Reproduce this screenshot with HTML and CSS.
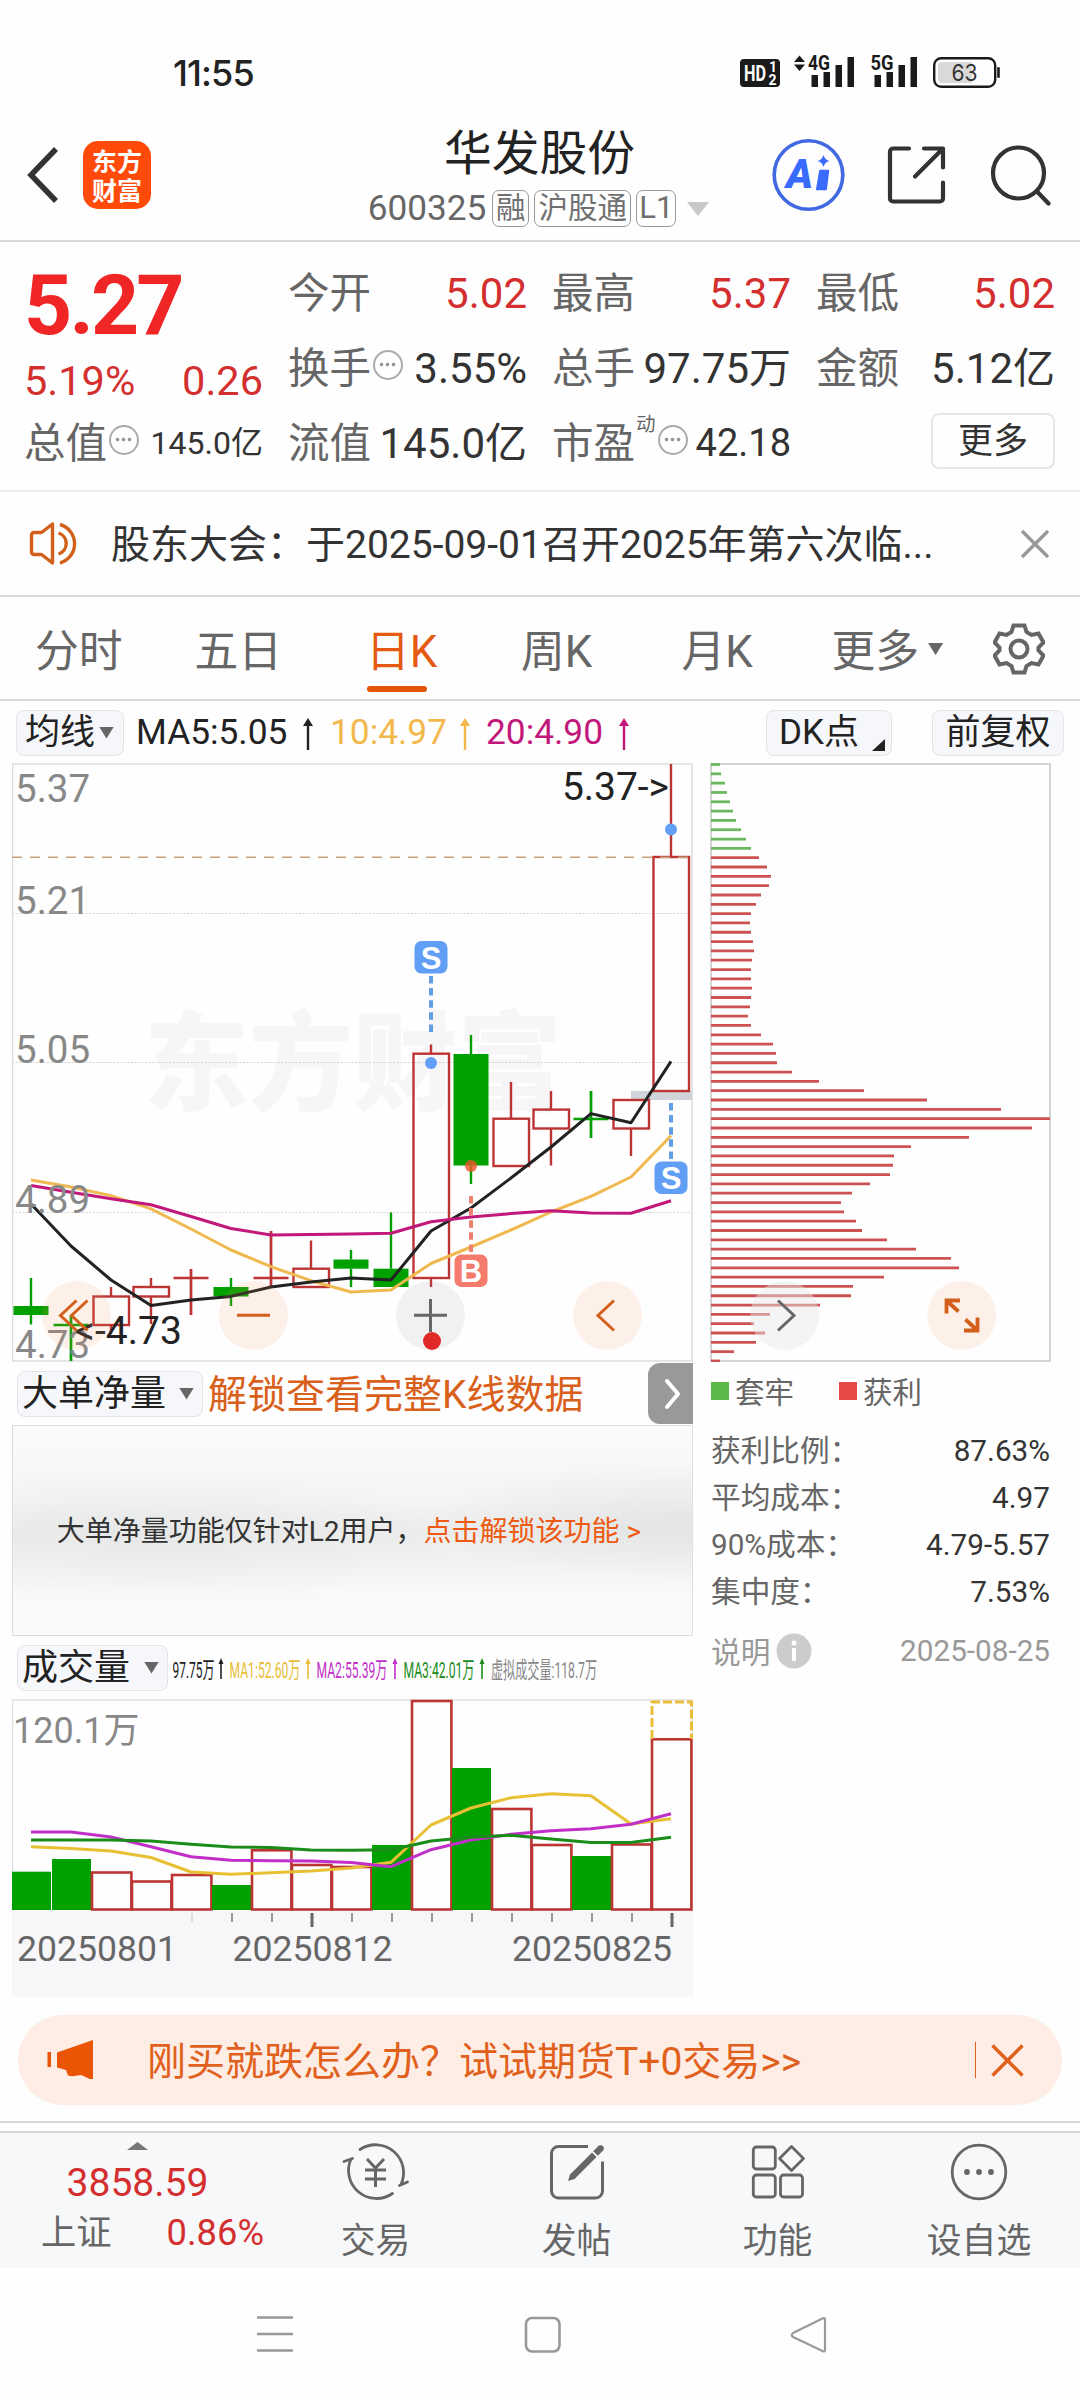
FILE: index.html
```html
<!DOCTYPE html>
<html lang="zh-CN">
<head>
<meta charset="utf-8">
<title>华发股份 600325</title>
<link rel="stylesheet" href="styles.css">
</head>
<body>
<div class="screen">
  <div class="status">
    <span class="clock">11:55</span>
    <svg class="status-icons" width="262" height="36" viewBox="738 52 262 36">
      <rect x="740" y="59" width="40" height="28" rx="4" fill="#1a1a1a"/>
      <text x="744" y="81" class="st-hd" textLength="22" lengthAdjust="spacingAndGlyphs">HD</text>
      <text x="769" y="71.500" class="st-sub">1</text>
      <text x="768.500" y="85" class="st-sub">2</text>
      <path d="M794 62l5.500-6.500 5.500 6.500zM794 64.500l5.500 6.500 5.500-6.500z" fill="#1a1a1a"/>
      <text x="808" y="70" class="st-net" textLength="22" lengthAdjust="spacingAndGlyphs">4G</text>
      <text x="870.500" y="70" class="st-net" textLength="23" lengthAdjust="spacingAndGlyphs">5G</text>
      <path d="M811.500 75h6.500v12h-6.500zM823.500 72h6.500v15h-6.500zM835.500 65h6.500v22h-6.500zM847.500 57h6.500v30h-6.500zM874.500 75h6.500v12h-6.500zM886.500 72h6.500v15h-6.500zM898.500 65h6.500v22h-6.500zM910.500 57h6.500v30h-6.500z" fill="#1a1a1a"/>
      <rect x="934.200" y="58.200" width="61" height="28.600" rx="7" fill="none" stroke="#1a1a1a" stroke-width="2.400"/>
      <path d="M938 66a4 4 0 0 1 4-4h30v21h-30a4 4 0 0 1-4-4z" fill="#d9d9d9"/>
      <rect x="997.200" y="67" width="2.600" height="11" rx="1.300" fill="#1a1a1a"/>
      <text x="951.500" y="81" class="st-bat" textLength="26" lengthAdjust="spacingAndGlyphs">63</text>
    </svg>
  </div>

  <header class="header">
    <div class="head-left">
      <svg width="32" height="58" viewBox="0 0 32 58"><path d="M30 3L5 29l25 26" fill="none" stroke="#333" stroke-width="5.500"/></svg>
      <div class="logo"><span>东方</span><span>财富</span></div>
    </div>
    <div class="head-mid">
      <div class="title">华发股份</div>
      <div class="code-row"><span class="code">600325</span><span class="tag t1">融</span><span class="tag t2">沪股通</span><span class="tag t3">L1</span>
        <svg width="22" height="14" viewBox="0 0 22 14"><path d="M0 0h22L11 14z" fill="#c8c8c8"/></svg>
      </div>
    </div>
    <div class="head-right">
      <svg width="74" height="74" viewBox="771 137.500 74 74"><circle cx="808.500" cy="174.500" r="34.300" fill="none" stroke="#4169e1" stroke-width="3.600"/><text class="ai-a" x="786" y="187">A</text><path d="M820 170h8.500l-2.300 19h-9.500z" fill="#3a6bff" stroke="#3a6bff" stroke-width="1.500" stroke-linejoin="round"/><path d="M823.500 154.500q1.400 4.800 6 6q-4.600 1.200-6 6q-1.400-4.800-6-6q4.600-1.200 6-6z" fill="#3a6bff"/></svg>
      <svg width="60" height="60" viewBox="887 144.500 60 60" fill="none" stroke="#333" stroke-width="4.200" stroke-linecap="round" stroke-linejoin="round"><path d="M909 148h-16a3 3 0 0 0-3 3v47a3 3 0 0 0 3 3h47a3 3 0 0 0 3-3v-16M924 148h19v19M942 149l-27 27"/></svg>
      <svg width="62" height="62" viewBox="989 142.500 62 62" fill="none" stroke="#333" stroke-width="4.200" stroke-linecap="round"><circle cx="1018.500" cy="171.500" r="25.500"/><path d="M1037 190l11.500 12"/></svg>
    </div>
  </header>

  <section class="quote">
    <div class="q-left">
      <div class="price">5.27</div>
      <div class="cell chg red"><span>5.19%</span><span>0.26</span></div>
      <div class="cell"><span class="lab">总值<i class="dots"></i></span><span class="val small">145.0亿</span></div>
    </div>
    <div class="q-grid">
      <div class="cell"><span class="lab">今开</span><span class="val red">5.02</span></div>
      <div class="cell"><span class="lab">最高</span><span class="val red">5.37</span></div>
      <div class="cell"><span class="lab">最低</span><span class="val red">5.02</span></div>
      <div class="cell"><span class="lab">换手<i class="dots"></i></span><span class="val">3.55%</span></div>
      <div class="cell"><span class="lab">总手</span><span class="val">97.75万</span></div>
      <div class="cell"><span class="lab">金额</span><span class="val">5.12亿</span></div>
      <div class="cell"><span class="lab">流值</span><span class="val">145.0亿</span></div>
      <div class="cell"><span class="lab">市盈<sup>动</sup><i class="dots"></i></span><span class="val mid">42.18</span></div>
      <div class="cell end"><span class="more">更多</span></div>
    </div>
  </section>

  <section class="notice">
    <svg width="54" height="46" viewBox="29 521 54 46" fill="none" stroke="#d2601a" stroke-width="3.400" stroke-linejoin="round"><path d="M52.500 524v39l-11-8.500h-7.500a2.500 2.500 0 0 1-2.500-2.500v-17a2.500 2.500 0 0 1 2.500-2.500h7.500z"/><path d="M58.500 533a11 11 0 0 1 0 21M60 524.500a20 20 0 0 1 0 38.500"/></svg>
    <span class="n-text">股东大会：于2025-09-01召开2025年第六次临...</span>
    <svg class="n-close" width="30" height="30" viewBox="0 0 30 30"><path d="M2 2l26 26M28 2L2 28" stroke="#999" stroke-width="3.400"/></svg>
  </section>

  <nav class="tabs">
    <span class="tab">分时</span><span class="tab">五日</span><span class="tab on">日K</span><span class="tab">周K</span><span class="tab">月K</span><span class="tab">更多<i class="tri t-sm"></i></span>
    <svg class="gear" width="52" height="52" viewBox="-26 -26 52 52" fill="none" stroke="#666" stroke-width="4" stroke-linejoin="miter"><circle r="8.500"/><path d="M-5.500-23.500h11l2 6.500l5 3l7-1.500l5 9l-5 5v3l5 5l-5 9l-7-1.500l-5 3l-2 6.500h-11l-2-6.500l-5-3l-7 1.500l-5-9l5-5v-3l-5-5l5-9l7 1.500l5-3z"/></svg>
  </nav>

  <div class="ma-row">
    <span class="btn b1"><span>均线</span><i class="tri t-ma"></i></span>
    <span class="ma k">MA5:5.05</span><svg class="arr" width="10" height="32" viewBox="0 0 10 32"><path d="M5 0l5 8H6.200v24H3.800V8H0z" fill="#222"/></svg>
    <span class="ma y">10:4.97</span><svg class="arr" width="10" height="32" viewBox="0 0 10 32"><path d="M5 0l5 8H6.200v24H3.800V8H0z" fill="#f2b84c"/></svg>
    <span class="ma m">20:4.90</span><svg class="arr" width="10" height="32" viewBox="0 0 10 32"><path d="M5 0l5 8H6.200v24H3.800V8H0z" fill="#c2187c"/></svg>
    <span class="btn b2"><span>DK点</span><svg width="13" height="12" viewBox="0 0 13 12"><path d="M13 0v12H0z" fill="#222"/></svg></span>
    <span class="btn b3"><span>前复权</span></span>
  </div>

  <main class="charts">
    <div class="col-main">
      <svg class="kline" width="681" height="599" viewBox="12 763 681 599">
        <text class="wm" x="144" y="1102" textLength="418" lengthAdjust="spacingAndGlyphs">东方财富</text>
        <g stroke="#d4d4d4" stroke-dasharray="2 1.500"><path d="M12 913.500h680M12 1062.500h680M12 1212.500h680"/></g>
        <path d="M12.500 1361V764h679.500v597z" fill="none" stroke="#dedede" stroke-width="1.600"/>
        <path d="M631 1095.500h61" stroke="#d0d3d8" stroke-width="9"/>
        <g id="candles"></g>
        <path d="M12 857.300h680" stroke="#c4a27c" stroke-width="1.500" stroke-dasharray="10 8"/>
        <g fill="none" stroke-width="3" stroke-linejoin="round">
          <path id="ma10" stroke="#f0b950"/>
          <path id="ma5" stroke="#222"/>
          <path id="ma20" stroke="#c2187c"/>
        </g>
        <g class="axis"><text x="15" y="802">5.37</text><text x="15" y="914">5.21</text><text x="15" y="1063">5.05</text><text x="15" y="1213">4.89</text><text x="15" y="1358">4.73</text></g>
        <text class="mark" x="562" y="800" textLength="107">5.37-&gt;</text>
        <text class="mark" x="75" y="1344" textLength="107">&lt;-4.73</text>
        <g stroke="#609fe8" stroke-width="4" stroke-dasharray="7.500 4.600"><path d="M431 976v56M671 1103v56"/></g>
        <path d="M471 1196v56" stroke="#ee8070" stroke-width="4" stroke-dasharray="7.500 4.600"/>
        <g fill="#609ff5"><circle cx="431" cy="1063" r="6"/><circle cx="671" cy="829.500" r="6"/><rect x="414.500" y="941" width="33" height="32.500" rx="7"/><rect x="654.500" y="1161.500" width="33" height="32.500" rx="7"/></g>
        <circle cx="471" cy="1166" r="6" fill="#f0522c" fill-opacity=".8"/>
        <rect x="454.500" y="1254.500" width="33" height="32.500" rx="7" fill="#f57c6c"/>
        <g class="sig"><text x="431" y="968.500">S</text><text x="671" y="1189">S</text><text x="471" y="1282">B</text></g>
        <g fill="#f8905a" fill-opacity=".13"><circle cx="76.500" cy="1315.500" r="34.500"/><circle cx="253.500" cy="1315.500" r="34.500"/><circle cx="607.500" cy="1315.500" r="34.500"/></g>
        <circle cx="430.500" cy="1315.500" r="34.500" fill="#888" fill-opacity=".11"/>
        <g fill="none" stroke="#d2601a" stroke-width="3"><path d="M76.500 1300.500l-16 15l16 15M87.500 1300.500l-16 15l16 15M237 1315.300h33M614 1300.500l-16 15l16 15"/></g>
        <path d="M414 1315.300h33M430.500 1299v33" stroke="#666" stroke-width="3"/>
        <circle cx="432" cy="1341" r="9" fill="#e32828"/>
      </svg>
      <div class="ind-row">
        <span class="btn b4"><span>大单净量</span><i class="tri"></i></span><span class="unlock">解锁查看完整K线数据</span>
        <span class="next"><svg width="18" height="32" viewBox="0 0 18 32"><path d="M3 3l11 13L3 29" fill="none" stroke="#fff" stroke-width="4" stroke-linecap="round" stroke-linejoin="round"/></svg></span>
      </div>
      <div class="l2"><span>大单净量功能仅针对L2用户，</span><b>点击解锁该功能 &gt;</b></div>
      <div class="vol-row">
        <span class="btn b5"><span>成交量</span><i class="tri"></i></span>
        <svg width="440" height="40" viewBox="168 1648 440 40" class="vstat">
          <text x="172.500" y="1678" fill="#222" textLength="42" lengthAdjust="spacingAndGlyphs">97.75万</text>
          <text x="229.500" y="1678" fill="#e8bd38" textLength="71" lengthAdjust="spacingAndGlyphs">MA1:52.60万</text>
          <text x="316.500" y="1678" fill="#c030c8" textLength="71" lengthAdjust="spacingAndGlyphs">MA2:55.39万</text>
          <text x="403.500" y="1678" fill="#1a8c1a" textLength="71" lengthAdjust="spacingAndGlyphs">MA3:42.01万</text>
          <text x="491" y="1678" fill="#888" textLength="106" lengthAdjust="spacingAndGlyphs">虚拟成交量:118.7万</text>
          <g stroke-width="1.600"><path d="M221 1679v-18" stroke="#222"/><path d="M308 1679v-18" stroke="#e8bd38"/><path d="M395 1679v-18" stroke="#c030c8"/><path d="M482 1679v-18" stroke="#1a8c1a"/></g>
          <path d="M218.500 1664l2.500-6 2.500 6z" fill="#222"/><path d="M305.500 1664l2.500-6 2.500 6z" fill="#e8bd38"/><path d="M392.500 1664l2.500-6 2.500 6z" fill="#c030c8"/><path d="M479.500 1664l2.500-6 2.500 6z" fill="#1a8c1a"/>
        </svg>
      </div>
      <svg class="volume" width="681" height="299" viewBox="12 1699 681 299">
        <path d="M12 1911h681v86H12z" fill="#f7f7fa"/>
        <path d="M12.500 1911v-211h680v211" fill="none" stroke="#e0e0e0" stroke-width="1.600"/>
        <text class="vmax" x="13" y="1743">120.1万</text>
        <g id="bars"></g>
        <path d="M652 1739v-37h39.500v37" fill="none" stroke="#e8bd38" stroke-width="3" stroke-dasharray="9 3"/>
        <g fill="none" stroke-width="3" stroke-linejoin="round">
          <path id="v1" stroke="#e8c034"/><path id="v2" stroke="#c030c8"/><path id="v3" stroke="#1a8c1a"/>
        </g>
        <g id="ticks"></g>
        <g class="dates"><text x="17" y="1961">20250801</text><text x="232.500" y="1961">20250812</text><text x="512" y="1961">20250825</text></g>
      </svg>
    </div>
    <aside class="col-side">
      <svg class="chips" width="342" height="599" viewBox="710 763 342 599">
        <path d="M711 764h339v597H711z" fill="none" stroke="#c8c8c8" stroke-width="1.600"/>
        <g id="cost"></g>
        <circle cx="784.700" cy="1315.500" r="34.500" fill="#e8e8e8" fill-opacity=".45"/>
        <circle cx="961.700" cy="1315.500" r="34.500" fill="#f8905a" fill-opacity=".13"/>
        <path d="M778 1300.500l16 15l-16 15" fill="none" stroke="#666" stroke-width="3"/>
        <path d="M960 1300.500h-13.500v13M946.500 1300.500l12 11M964 1330.500h13.500v-13M977.500 1330.500l-12-11" fill="none" stroke="#d2601a" stroke-width="3.800"/>
      </svg>
      <div class="legend"><i class="sq g"></i><span>套牢</span><i class="sq r"></i><span>获利</span></div>
      <dl class="facts">
        <div><dt>获利比例：</dt><dd>87.63%</dd></div>
        <div><dt>平均成本：</dt><dd>4.97</dd></div>
        <div><dt>90%成本：</dt><dd>4.79-5.57</dd></div>
        <div><dt>集中度：</dt><dd>7.53%</dd></div>
      </dl>
      <div class="explain"><span>说明</span><svg width="36" height="36" viewBox="0 0 36 36"><circle cx="18" cy="18" r="17.500" fill="#ccc"/><circle cx="18" cy="10" r="2.500" fill="#fff"/><path d="M18 15v13" stroke="#fff" stroke-width="4"/></svg><span class="date">2025-08-25</span></div>
    </aside>
  </main>

  <div class="banner">
    <svg width="46" height="40" viewBox="47 2040 46 40" fill="#e95504"><path d="M93 2040v39h-3.500l-8-4-4 .500q-5 1.500-9.500 0l-2-5.500l-9-2.500v-15zM47.500 2052h3.500v15h-3.500z"/></svg>
    <span class="b-text">刚买就跌怎么办？试试期货T+0交易&gt;&gt;</span>
    <i class="b-sep"></i>
    <svg width="33" height="33" viewBox="0 0 33 33"><path d="M1.500 1.500l30 30M31.500 1.500l-30 30" stroke="#e0601c" stroke-width="3.400"/></svg>
  </div>

  <footer class="toolbar">
    <div class="index">
      <svg width="21" height="8" viewBox="0 0 21 8"><path d="M0 8L10.500 0 21 8z" fill="#777"/></svg>
      <div class="idx-num">3858.59</div>
      <div class="idx-row"><span>上证</span><b>0.86%</b></div>
    </div>
    <div class="tool"><svg width="68" height="60" viewBox="342 2142 68 60" fill="none" stroke="#666" stroke-width="2.800" stroke-linecap="round"><path d="M360 2149.500a28 28 0 0 1 41 35M392.500 2193.500a28 28 0 0 1-41.500-34.500M344 2161.500l8.500-3M399.500 2185.500l8-3.500"/><path d="M367 2159l8.500 9 8.500-9M375.500 2168v19M365 2170h21M365 2179h21" stroke-linecap="butt" stroke-width="3"/></svg><span>交易</span></div>
    <div class="tool"><svg width="60" height="60" viewBox="547 2142 60 60" fill="none" stroke="#666" stroke-width="3"><path d="M588 2146.500h-29.500a7 7 0 0 0-7 7V2191a7 7 0 0 0 7 7h37a7 7 0 0 0 7-7v-29.500"/><path d="M568 2181l2-6.500l22-22l4.500 4.500l-22 22z" fill="#666" stroke="none"/><path d="M595.500 2153.500l4-4" stroke-width="6.500"/><circle cx="600.500" cy="2148.500" r="3.300" fill="#666" stroke="none"/></svg><span>发帖</span></div>
    <div class="tool"><svg width="60" height="60" viewBox="748 2142 60 60" fill="none" stroke="#666" stroke-width="2.800"><rect x="753.300" y="2147" width="22" height="22" rx="3"/><rect x="753.300" y="2175" width="22" height="22" rx="3"/><rect x="780.500" y="2175" width="22" height="22" rx="3"/><path d="M791.500 2146.500l12 12-12 12-12-12z" stroke-linejoin="round"/></svg><span>功能</span></div>
    <div class="tool"><svg width="60" height="60" viewBox="949 2142 60 60"><circle cx="979" cy="2172" r="26.800" fill="none" stroke="#666" stroke-width="2.800"/><g fill="#666"><circle cx="967" cy="2172" r="2.900"/><circle cx="979" cy="2172" r="2.900"/><circle cx="991" cy="2172" r="2.900"/></g></svg><span>设自选</span></div>
  </footer>

  <div class="sysnav">
    <svg width="36" height="36" viewBox="257 2316 36 36"><path d="M257 2317.500h36M257 2334h36M257 2350.500h36" stroke="#999" stroke-width="2.600"/></svg>
    <svg width="38" height="38" viewBox="523.500 2315 38 38"><rect x="526.500" y="2317" width="33.500" height="33.500" rx="6" fill="none" stroke="#999" stroke-width="2.600"/></svg>
    <svg width="38" height="38" viewBox="790 2315 38 38"><path d="M822.500 2317.500q2.500-1.500 2.500 1.500v29.500q0 3-2.500 1.500L793 2336q-2.500-2 0-4z" fill="none" stroke="#999" stroke-width="2.200" stroke-linejoin="round"/></svg>
  </div>
</div>
<script src="charts.js"></script>
</body>
</html>
```

FILE: styles.css
```css
* { box-sizing: border-box; }
body { margin: 0; background: #fefefe; font-family: Roboto, "Noto Sans CJK SC", sans-serif; color: #333; }
svg { display: block; flex: none; }
i { font-style: normal; }
.screen { width: 1080px; height: 2400px; overflow: hidden; display: flex; flex-direction: column; background: #fefefe; }
.screen > * { flex: none; }
.red { color: #d42f2f; }

.status { height: 94px; padding: 52px 80px 0 173px; display: flex; justify-content: space-between; }
.clock { font: 500 36px/43px Inter, sans-serif; color: #222; letter-spacing: -.9px; }
.st-hd { font: 700 22px Roboto, sans-serif; fill: #fff; }
.st-sub { font: 700 14px Roboto, sans-serif; fill: #fff; }
.st-net { font: 700 20px Roboto, sans-serif; fill: #1a1a1a; }
.st-bat { font: 400 23px Inter, sans-serif; fill: #333; }

.header { height: 148px; display: grid; grid-template-columns: 310px 460px 310px; border-bottom: 2px solid #d8d8d8; }
.head-left { display: flex; align-items: center; padding: 15px 0 0 26px; gap: 25px; }
.logo { width: 68px; height: 68px; border-radius: 15px; background: #ff4a0a; color: #fff; display: flex; flex-direction: column; align-items: center; justify-content: center; font: 700 25px/29px "Noto Sans CJK SC", sans-serif; }
.head-mid { display: flex; flex-direction: column; align-items: center; padding: 32px 1px 0 0; }
.title { font-size: 47.800px; line-height: 56px; color: #222; }
.code-row { display: flex; align-items: center; margin: 8px 2px 0 0; height: 37px; }
.code { font-size: 35.200px; line-height: 37px; color: #666; margin-right: 6px; }
.tag { border: 1.500px solid #999; border-radius: 7px; height: 37px; font-size: 29.500px; line-height: 34px; color: #707070; text-align: center; margin-right: 5px; }
.t1 { width: 37px; } .t2 { width: 97px; } .t3 { width: 40px; margin-right: 11px; font-size: 31px; }
.head-right { display: flex; align-items: center; justify-content: space-between; padding: 15px 29px 0 1px; }
.ai-a { font: italic 900 41px Roboto, sans-serif; fill: #3a6bff; }

.quote { height: 250px; display: flex; padding: 14px 25px 0 24px; gap: 25px; border-bottom: 2px solid #ececec; }
.q-left { width: 239px; }
.price { height: 88px; font-weight: 700; font-size: 84px; line-height: 100px; color: #f02626; letter-spacing: -2.800px; }
.cell { display: flex; justify-content: space-between; align-items: center; height: 75px; line-height: 75px; white-space: nowrap; }
.q-left .chg { font-size: 41.500px; height: 72px; }
.q-left .cell:last-child { height: 54px; }
.q-grid { flex: 1; display: grid; grid-template-columns: 239px 239px 239px; column-gap: 25px; grid-auto-rows: 75px; }
.lab { display: flex; align-items: center; font-size: 41.500px; color: #666; height: 75px; }
.val { font-size: 42px; color: #333; }
.val.red { color: #d42f2f; }
.val.small { font-size: 32px; }
.val.mid { font-size: 38px; }
.lab sup { font-size: 19.500px; line-height: 20px; align-self: flex-start; margin: 9px 0 0 1px; }
.dots { width: 30px; height: 30px; border: 2.500px solid #aaa; border-radius: 50%; margin: -7px 0 0 2px; background: radial-gradient(circle at 6.500px 12.500px, #999 1.600px, transparent 2.200px), radial-gradient(circle at 12.500px 12.500px, #999 1.600px, transparent 2.200px), radial-gradient(circle at 18.500px 12.500px, #999 1.600px, transparent 2.200px); }
.cell.end { justify-content: flex-end; }
.more { width: 124px; height: 56px; border: 2px solid #e6e6e6; border-radius: 8px; line-height: 53px; text-align: center; font-size: 35px; color: #333; margin-top: -5px; }

.notice { height: 105px; display: flex; align-items: center; padding: 0 30px 0 29px; border-bottom: 2px solid #d8d8d8; }
.n-text { font-size: 39px; margin: -5px 0 0 28px; flex: 1; white-space: nowrap; }

.tabs { height: 104px; display: grid; grid-template-columns: 159.500px 169.500px 157px 160.500px 150px 161px 52px; align-items: center; border-bottom: 2px solid #d8d8d8; padding-left: 35px; }
.tab { font-size: 43.800px; line-height: 98px; height: 104px; padding-top: 6px; color: #666; white-space: nowrap; display: flex; align-items: center; }
.tab.on { color: #e55a10; flex-direction: column; align-items: flex-start; line-height: 110px; padding: 0 0 0 2px; }
.tab.on::after { content: ""; width: 60px; height: 6px; border-radius: 3px; background: #e55507; margin: -21px 0 0 1px; flex: none; }
.tri { display: inline-block; width: 15px; height: 12px; background: #666; clip-path: polygon(0 0, 100% 0, 50% 100%); flex: none; }
.tri.t-sm { margin: -6px 0 0 9px; }
.tri.t-ma { margin-left: 4px; }

.ma-row { height: 62px; display: flex; align-items: center; padding: 1px 16px 0 16px; }
.btn { display: flex; align-items: center; height: 46px; border: 1.500px solid #e2e4e8; border-radius: 8px; background: #f6f7fa; font-size: 35px; line-height: 44px; color: #222; white-space: nowrap; }
.btn > span { margin-top: 1px; }
.b1 { width: 108px; padding-left: 8px; }
.ma { font-size: 35.300px; line-height: 47px; white-space: nowrap; }
.k { color: #222; margin-left: 12px; width: 167px; } .y { color: #f2b84c; margin-left: 17px; width: 130px; } .m { color: #c2187c; margin-left: 16px; width: 133px; }
.arr { margin-top: 2px; }
.b2 { width: 126px; padding: 0 6px 0 12px; justify-content: space-between; margin-left: auto; }
.b2 svg { margin-top: 24px; }
.b3 { width: 132px; justify-content: center; margin-left: 40px; }

.charts { height: 1235px; display: flex; gap: 17px; padding-left: 12px; }
.col-main { width: 681px; }
.col-side { width: 342px; }
.wm { font: 900 108px "Noto Sans CJK SC", sans-serif; fill: #f6f6f6; }
.axis { font-size: 38.500px; fill: #888; }
.mark { font-size: 39px; fill: #222; }
.sig { font: 700 31px "Liberation Sans", sans-serif; fill: #fff; text-anchor: middle; }
.ind-row { height: 63px; display: flex; align-items: center; padding-left: 5px; }
.b4 { width: 186px; padding: 0 8px 0 4px; justify-content: space-between; font-size: 36px; }
.unlock { font-size: 39px; color: #d9601a; margin: -5px 0 0 5px; flex: 1; white-space: nowrap; }
.next { width: 45px; height: 61px; background: #999; border-radius: 12px 0 0 12px; display: flex; align-items: center; padding-left: 16px; }
.l2 { height: 211px; border: 1.500px solid #dedede; display: flex; align-items: center; justify-content: center; padding: 0 7px 4px 0; font-size: 28px; color: #333; white-space: nowrap; background: radial-gradient(ellipse 300px 70px at 22% 52%, rgba(226,228,227,.5), transparent), radial-gradient(ellipse 260px 60px at 98% 45%, rgba(222,224,223,.6), transparent), linear-gradient(#fafbfa, #f4f5f5 35%, #ebeceb 50%, #f0f1f1 62%, #f8f9f8 80%, #fafafa); }
.l2 b { font-weight: 400; color: #ee5a12; }
.vol-row { height: 63px; display: flex; align-items: center; padding-left: 5px; }
.b5 { width: 151px; padding: 0 8px 0 4px; justify-content: space-between; font-size: 36px; }
.vstat { font-size: 22.500px; }
.vmax { font-size: 36px; fill: #888; }
.dates { font-size: 35.600px; fill: #666; }
.legend { display: flex; align-items: center; height: 57px; font-size: 29.500px; color: #666; }
.legend span { margin-top: -2px; }
.sq { width: 18px; height: 18px; margin: 0 6px 0 1px; }
.sq.g { background: #5bb947; } .sq.r { background: #e84a4a; margin-left: 45px; }
.facts { margin: 8px 2px 0 1px; }
.facts div { display: flex; justify-content: space-between; height: 47px; align-items: center; font-size: 29.700px; line-height: 47px; }
dt { color: #666; } dd { margin: 0; color: #333; }
.explain { display: flex; align-items: center; margin: 16px 2px 0 1px; height: 40px; font-size: 29.700px; color: #999; gap: 6px; }
.explain span { margin-top: -2px; }
.explain .date { margin-left: auto; }

.banner { margin: 17px 18px 0; height: 90px; border-radius: 45px; background: #fdede4; display: flex; align-items: center; padding: 0 21px 0 29px; }
.b-text { font-size: 39px; color: #e0601c; margin: -5px 0 0 54px; flex: 1; white-space: nowrap; }
.b-sep { width: 1.500px; height: 36px; background: #e0601c; margin-right: 15px; }
.banner svg:last-child { margin-right: 17px; }

.toolbar { margin-top: 16px; height: 147px; border-top: 2px solid #d8d8d8; display: grid; grid-template-columns: 275px 201px 201px 201px 202px; }
.toolbar > * { border-top: 2px solid #d4d6d8; margin-top: 8px; background: #f7f8fa; }
.index { display: flex; flex-direction: column; align-items: center; padding-top: 9px; }
.idx-num { font-size: 39px; line-height: 46px; margin-top: 10px; color: #d42f2f; }
.idx-row { display: flex; gap: 55px; font-size: 35.300px; line-height: 46px; color: #666; margin-top: 4px; align-self: stretch; padding-left: 41px; }
.idx-row b { font-weight: 400; color: #d42f2f; font-size: 36.300px; }
.tool { display: flex; flex-direction: column; align-items: center; padding-top: 9px; font-size: 34.800px; color: #666; }
.tool span { line-height: 46px; margin-top: 16px; }

.sysnav { flex: 1 0 auto; display: flex; justify-content: space-between; padding: 48px 252px 0 257px; }
```

FILE: charts.js
```javascript
const X0 = 31, STEP = 40;
const RED = '#bc3434', GREEN = '#00a000';

// direction, high, body top, body bottom, low
const candles = [
  ['g', 1278, 1306, 1315, 1324.5], ['gx', 1316, 1325, 1325, 1361], ['r', 1287, 1296.5, 1325, 1334],
  ['r', 1278, 1287, 1296.5, 1324], ['rx', 1269, 1278, 1278, 1315], ['g', 1278, 1287, 1296.5, 1306],
  ['rx', 1231, 1278, 1278, 1287], ['r', 1240.5, 1268.7, 1287, 1287], ['g', 1250, 1259.5, 1268.7, 1287],
  ['g', 1212.5, 1268.7, 1287, 1287], ['r', 1044.5, 1053.7, 1278, 1287], ['g', 1035, 1054, 1165.5, 1184],
  ['r', 1082, 1118.7, 1166, 1166], ['r', 1091, 1109.6, 1128.5, 1165.5], ['gx', 1091, 1119, 1119, 1138],
  ['r', 1100, 1100, 1128.5, 1156], ['r', 764, 857, 1091, 1091]
];
const vols = [
  ['g', 1871.7], ['g', 1859], ['r', 1872.5], ['r', 1881.5], ['r', 1875], ['g', 1885], ['r', 1850.3],
  ['r', 1865], ['r', 1867], ['g', 1845], ['r', 1701], ['g', 1768], ['r', 1809], ['r', 1845], ['g', 1856],
  ['r', 1844.5], ['r', 1739.3]
];
const lines = {
  ma5: [1204, 1246, 1280, 1305.6, 1300, 1296.4, 1287, 1282, 1278, 1280, 1231, 1208, 1178, 1147, 1113.6, 1122.8, 1061.4],
  ma10: [1180, 1187, 1195.6, 1208.8, 1229, 1250, 1266.7, 1280.7, 1292, 1290, 1263.5, 1247, 1230, 1212, 1196.4, 1177, 1135.7],
  ma20: [1185.5, 1192.3, 1198.8, 1204.8, 1216.5, 1228.5, 1235, 1234.5, 1234, 1233.3, 1221.7, 1217, 1213.6, 1210.8, 1213, 1213.2, 1200.8],
  v1: [1846.7, 1848.5, 1851, 1857.5, 1872, 1874.3, 1872.7, 1871, 1868, 1862.3, 1825, 1808, 1797.7, 1793.7, 1795.7, 1824, 1818.7],
  v2: [1832, 1832, 1837, 1846.7, 1856.7, 1860.3, 1860.7, 1861, 1862.5, 1866.7, 1849.7, 1840, 1834.3, 1830.7, 1828.7, 1824.3, 1813.7],
  v3: [1840, 1840, 1840, 1841, 1844.3, 1847, 1847.5, 1850, 1850.3, 1849.7, 1841, 1837.3, 1835.3, 1839, 1842.5, 1842.5, 1837.3]
};
const cost = [
  9, 10, 14, 16, 19, 22, 25, 30, 35, 40,
  48, 56, 60, 58, 50, 45, 40, 39, 40, 42, 43, 41, 40, 40, 41, 40, 39, 37, 40, 50,
  62, 65, 66, 81, 108, 153, 216, 290, 339, 321, 258, 200, 183, 182, 179, 159, 141, 130, 133, 145,
  151, 176, 205, 240, 248, 173, 142, 140, 109, 59, 43, 54, 45, 23, 9
];

let svg = '';
candles.forEach(([d, hi, top, bot, lo], i) => {
  const x = X0 + STEP * i, c = d[0] === 'g' ? GREEN : RED;
  svg += `<path d="M${x} ${hi}V${top}M${x} ${bot}V${lo}" stroke="${c}" stroke-width="2.4"/>`;
  if (d[1]) svg += `<path d="M${x - 17.5} ${top}h35M${x} ${hi}V${lo}" stroke="${c}" stroke-width="2.4"/>`;
  else if (d === 'g') svg += `<rect x="${x - 17.5}" y="${top}" width="35" height="${bot - top}" fill="${c}"/>`;
  else svg += `<rect x="${x - 17.5}" y="${top}" width="35.5" height="${bot - top}" fill="none" stroke="${c}" stroke-width="2.4"/>`;
});
document.getElementById('candles').innerHTML = svg;

svg = '';
vols.forEach(([d, top], i) => {
  const x = X0 + STEP * i;
  svg += d === 'g'
    ? `<rect x="${x - 19}" y="${top}" width="39" height="${1910 - top}" fill="${GREEN}"/>`
    : `<rect x="${x - 19}" y="${top}" width="39.4" height="${1909.5 - top}" fill="none" stroke="${RED}" stroke-width="2.6"/>`;
});
document.getElementById('bars').innerHTML = svg;

for (const id in lines) {
  document.getElementById(id).setAttribute('d', 'M' + lines[id].map((y, i) => `${X0 + STEP * i} ${y}`).join('L'));
}

svg = '';
for (let i = 4; i < 17; i++) {
  const big = i === 7 || i === 16, x = X0 + STEP * i + 1;
  svg += `<path d="M${x} 1913v${big ? 14 : 9}" stroke="${i === 4 ? '#ddd' : big ? '#666' : '#999'}" stroke-width="${big ? 3 : 2}"/>`;
}
document.getElementById('ticks').innerHTML = svg;

svg = '';
cost.forEach((w, i) => {
  const y = 764.5 + i * 9.32;
  svg += `<path d="M711 ${y}h${w}" stroke="${i < 10 ? '#6cb860' : '#cc5252'}" stroke-width="2.8"/>`;
});
document.getElementById('cost').innerHTML = svg;
```
